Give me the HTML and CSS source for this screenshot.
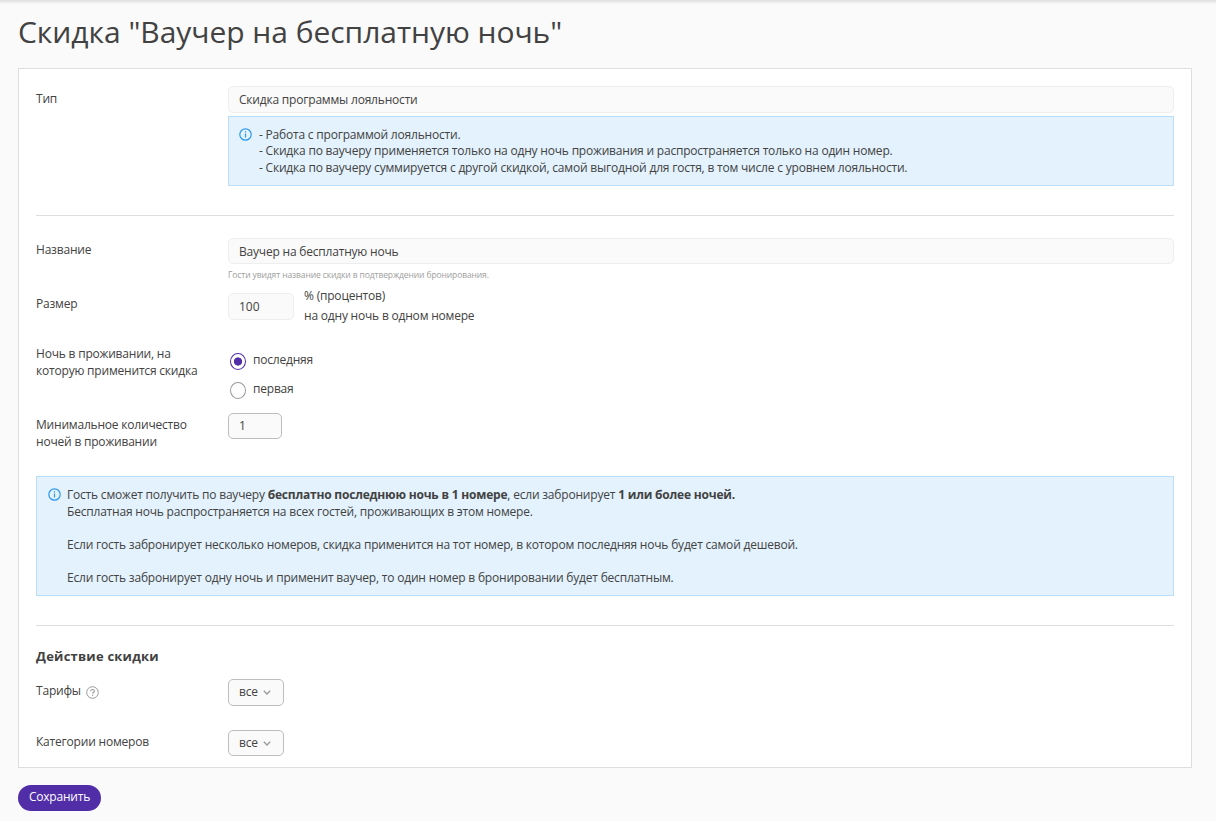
FILE: index.html
```html
<!DOCTYPE html>
<html lang="ru">

<head>
    <meta charset="UTF-8">
    <meta name="viewport" content="width=device-width, initial-scale=1.0">
    <title>Скидка "Ваучер на бесплатную ночь"</title>
    <link rel="stylesheet" href="styles.css">
</head>

<body>
    <main class="page">
        <h1>Скидка "Ваучер на бесплатную ночь"</h1>

        <form class="card">
            <!-- Тип -->
            <div class="row row-type">
                <div class="label">Тип</div>
                <div class="field">
                    <div class="input disabled">Скидка программы лояльности</div>
                    <div class="info">
                        <svg class="icon" viewBox="0 0 13 13" fill="none" stroke="#2b98f0">
                            <circle cx="6.5" cy="6.5" r="5.7" stroke-width="1.2" />
                            <path d="M6.5 5.6v4M6.5 3.3v1.3" stroke-width="1.2" />
                        </svg>
                        <div>
                            - Работа с программой лояльности.<br>
                            - Скидка по ваучеру применяется только на одну ночь проживания и распространяется только на один номер.<br>
                            - Скидка по ваучеру суммируется с другой скидкой, самой выгодной для гостя, в том числе с уровнем лояльности.
                        </div>
                    </div>
                </div>
            </div>

            <hr>

            <!-- Название -->
            <div class="row row-name">
                <div class="label">Название</div>
                <div class="field">
                    <div class="input disabled name">Ваучер на бесплатную ночь</div>
                    <div class="hint">Гости увидят название скидки в подтверждении бронирования.</div>
                </div>
            </div>

            <!-- Размер -->
            <div class="row row-size">
                <div class="label">Размер</div>
                <div class="field size">
                    <div class="input disabled percent">100</div>
                    <div class="units">% (процентов)<br>на одну ночь в одном номере</div>
                </div>
            </div>

            <div class="row row-night">
                <div class="label">Ночь в проживании, на которую применится скидка</div>
                <div class="field radios">
                    <label class="radio"><span class="dot checked"></span><span>последняя</span></label>
                    <label class="radio"><span class="dot"></span><span>первая</span></label>
                </div>
            </div>

            <div class="row row-min">
                <div class="label">Минимальное количество ночей в проживании</div>
                <div class="field">
                    <div class="input nights">1</div>
                </div>
            </div>

            <div class="info info-wide">
                <svg class="icon" viewBox="0 0 13 13" fill="none" stroke="#2b98f0">
                    <circle cx="6.5" cy="6.5" r="5.7" stroke-width="1.2" />
                    <path d="M6.5 5.6v4M6.5 3.3v1.3" stroke-width="1.2" />
                </svg>
                <div>
                    Гость сможет получить по ваучеру <b>бесплатно последнюю ночь в 1 номере</b>, если забронирует <b>1 или более ночей.</b><br>
                    Бесплатная ночь распространяется на всех гостей, проживающих в этом номере.<br><br>
                    Если гость забронирует несколько номеров, скидка применится на тот номер, в котором последняя ночь будет самой дешевой.<br><br>
                    Если гость забронирует одну ночь и применит ваучер, то один номер в бронировании будет бесплатным.
                </div>
            </div>

            <hr>

            <h2>Действие скидки</h2>

            <div class="row row-rates">
                <div class="label">Тарифы
                    <svg class="help" viewBox="0 0 13 13" fill="none" stroke="#9a9a9a">
                        <circle cx="6.5" cy="6.5" r="5.8" />
                        <path d="M4.7 5.2c0-2.4 3.7-2.3 3.7-.1 0 1.4-1.8 1.3-1.8 2.7M6.6 8.7v1.2" stroke-width="1.1" />
                    </svg>
                </div>
                <div class="field">
                    <div class="input select">все
                        <svg class="arrow" viewBox="0 0 8 5" fill="none" stroke="#999"><path d="M.8.8L4 4 7.2.8" stroke-width="1.3" /></svg>
                    </div>
                </div>
            </div>

            <div class="row row-rooms">
                <div class="label">Категории номеров</div>
                <div class="field">
                    <div class="input select">все
                        <svg class="arrow" viewBox="0 0 8 5" fill="none" stroke="#999"><path d="M.8.8L4 4 7.2.8" stroke-width="1.3" /></svg>
                    </div>
                </div>
            </div>
        </form>

        <button class="btn" type="button">Сохранить</button>
    </main>
</body>

</html>
```
FILE: styles.css
```css
* {
    box-sizing: border-box;
}

body {
    margin: 0;
    font-family: "Open Sans", Arial, sans-serif;
    font-size: 12px;
    line-height: 16.5px;
    letter-spacing: -0.2px;
    color: #424242;
    background: #fafafa;
}

.page {
    height: 821px;
    padding: 12px 24px 0 18px;
    overflow: hidden;
    background: linear-gradient(#dedede, #fafafa 4px);
}

h1 {
    margin: 0 0 16px;
    font-size: 30px;
    line-height: 40px;
    font-weight: 400;
    letter-spacing: -0.04px;
}

.card {
    height: 700px;
    padding: 17px;
    background: #fff;
    border: 1px solid #dedede;
}

.row {
    display: grid;
    grid-template-columns: 192px 1fr;
}

.label {
    padding: 4px 25px 0 0;
}

.row-type {
    height: 129px;
}

.row-type .label {
    padding-top: 5px;
}

.row-name {
    height: 55px;
}

.row-size {
    height: 52px;
}

.row-size .label {
    padding-top: 3px;
}

.row-night {
    height: 68px;
    padding-top: 1px;
}

.row-night .label {
    padding: 0 20px 0 0;
}

.row-min {
    height: 63px;
}

.row-rates {
    height: 51px;
}

hr {
    height: 1px;
    margin: 0 0 22px;
    border: 0;
    background: #dedede;
}

.input {
    height: 27px;
    padding: 0 10px;
    line-height: 25px;
    background: #fafafa;
    border: 1px solid #bdbdbd;
    border-radius: 5px;
}

.disabled {
    border-color: #eee;
}

.name {
    height: 26px;
}

.info {
    display: flex;
    gap: 7px;
    height: 70px;
    margin-top: 3px;
    padding: 9.7px 10px;
    background: #e3f2fd;
    border: 1px solid #bbdefb;
}

.icon {
    flex: none;
    width: 13px;
    height: 13px;
    margin-top: 1px;
}

.info-wide {
    gap: 6px;
    height: 120px;
    margin: 0 0 29px;
    padding: 10px 11px;
}

.hint {
    margin-top: 3px;
    font-size: 8.5px;
    letter-spacing: -0.11px;
    color: #9e9e9e;
}

.size {
    display: flex;
    gap: 10px;
}

.percent {
    width: 66px;
    letter-spacing: 0;
}

.units {
    margin-top: -7px;
    line-height: 20px;
}

.radios {
    padding-top: 6px;
}

.radio {
    display: flex;
    gap: 7px;
    height: 29px;
    padding-left: 2px;
}

.dot {
    width: 16px;
    height: 17px;
    margin-top: 1px;
    border: 1px solid #999;
    border-radius: 50%;
    background: #fff;
}

.checked {
    border-color: #512da8;
    background: radial-gradient(circle, #512da8 3.8px, #fff 4.4px);
}

.nights {
    width: 54px;
    height: 26px;
    line-height: 24px;
}

h2 {
    margin: -1px 0 14px;
    font-size: 13px;
    line-height: 18px;
    font-weight: 700;
    letter-spacing: 0.22px;
}

.help {
    width: 13px;
    height: 13px;
    margin-left: 2px;
    vertical-align: -4px;
}

.select {
    display: flex;
    align-items: center;
    gap: 5px;
    width: 56px;
    line-height: 23px;
    padding-bottom: 2px;
}

.row-rooms .select {
    height: 26px;
    padding-bottom: 1px;
}

.arrow {
    width: 8px;
    height: 5px;
    margin-top: 2px;
}

.btn {
    display: block;
    width: 83px;
    height: 26px;
    margin-top: 17px;
    padding: 0 0 3px;
    font: 12px "Open Sans", Arial, sans-serif;
    letter-spacing: -0.2px;
    color: #fff;
    background: #512da8;
    border: 0;
    border-radius: 13px;
}
```
